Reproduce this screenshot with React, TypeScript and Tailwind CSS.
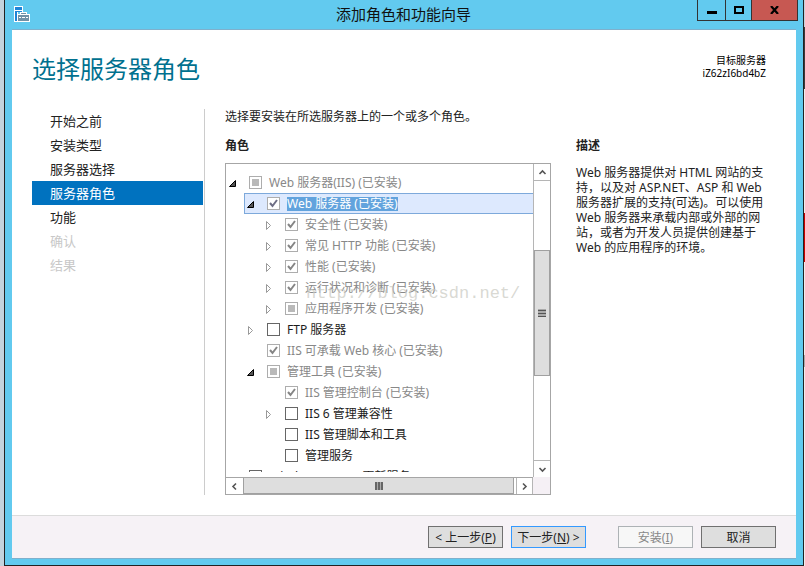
import { useState } from "react";
import clsx from "clsx";

type CheckState = "on" | "off" | "mixed";

type Role = {
  name: string;
  level: number;
  state: CheckState;
  installed?: boolean;
  arrow?: "open" | "closed";
};

const roles: Role[] = [
  { name: "Web 服务器(IIS) (已安装)", level: 0, state: "mixed", installed: true, arrow: "open" },
  { name: "Web 服务器 (已安装)", level: 1, state: "on", installed: true, arrow: "open" },
  { name: "安全性 (已安装)", level: 2, state: "on", installed: true, arrow: "closed" },
  { name: "常见 HTTP 功能 (已安装)", level: 2, state: "on", installed: true, arrow: "closed" },
  { name: "性能 (已安装)", level: 2, state: "on", installed: true, arrow: "closed" },
  { name: "运行状况和诊断 (已安装)", level: 2, state: "on", installed: true, arrow: "closed" },
  { name: "应用程序开发 (已安装)", level: 2, state: "mixed", installed: true, arrow: "closed" },
  { name: "FTP 服务器", level: 1, state: "off", arrow: "closed" },
  { name: "IIS 可承载 Web 核心 (已安装)", level: 1, state: "on", installed: true },
  { name: "管理工具 (已安装)", level: 1, state: "mixed", installed: true, arrow: "open" },
  { name: "IIS 管理控制台 (已安装)", level: 2, state: "on", installed: true },
  { name: "IIS 6 管理兼容性", level: 2, state: "off", arrow: "closed" },
  { name: "IIS 管理脚本和工具", level: 2, state: "off" },
  { name: "管理服务", level: 2, state: "off" },
  { name: "Windows Server 更新服务", level: 0, state: "off" },
];

const steps = ["开始之前", "安装类型", "服务器选择", "服务器角色", "功能", "确认", "结果"];

const indents = ["pl-0", "pl-[18px]", "pl-9"];

const ServerIcon = () => (
  <svg width="16" height="16" viewBox="0 0 16 16" shapeRendering="crispEdges">
    {/* server */}
    <path d="M0 0h9v7H4v9H0z" fill="#fff" />
    <path d="M1 1h7v3H1zM1 5h7v1H1zM1 6h2v9H1z" fill="#1f84d6" />
    <path d="M4 6h2v2H4z" fill="#62caef" />
    {/* toolbox */}
    <path d="M6 6h7v2h3v8H3V8h3z" fill="#fff" />
    <path d="M7 7h5v1H7zM4 9h11v2H4zM4 12h11v3H4z" fill="#7291a6" />
    <path d="M4 11h1v1H4zM14 11h1v1h-1zM7 11h1v1H7zM11 11h1v1h-1z" fill="#7291a6" />
  </svg>
);

const Arrow = ({ type }: { type: "open" | "closed" }) =>
  type === "open" ? (
    <svg width="7" height="7" viewBox="0 0 7 7">
      <path d="M6.5 0.5V6.5H0.5z" fill="#555" stroke="#000" />
    </svg>
  ) : (
    <svg width="7" height="11" viewBox="0 0 7 11">
      <path d="M1.5 1.5L5.5 5.5L1.5 9.5z" fill="#fff" stroke="#999" />
    </svg>
  );

const Chevron = ({ d }: { d: string }) => (
  <svg width="9" height="9" viewBox="0 0 9 9" fill="none" stroke="#555" strokeWidth="1.6">
    <path d={d} />
  </svg>
);

const RoleRow = ({ role, id, selected, onSelect }: { role: Role; id: string; selected: boolean; onSelect: () => void }) => {
  const [checked, setChecked] = useState(role.state !== "off");
  return (
    <li className={clsx("flex shrink-0 h-[21px]", indents[role.level])} onClick={onSelect}>
      <div
        className={clsx(
          "flex flex-1 items-center border-y border-l",
          selected ? "bg-[#dde9fe] border-[#7da9db]" : "border-transparent"
        )}
      >
        <span className="flex w-[22px] items-center pl-0.5 pt-0.5">
          {role.arrow && (
            <button type="button" aria-label="展开" className="flex">
              <Arrow type={role.arrow} />
            </button>
          )}
        </span>
        <span className="relative flex size-[13px]">
          <input
            id={id}
            type="checkbox"
            checked={checked}
            disabled={role.installed}
            onChange={() => setChecked(!checked)}
            className={clsx(
              "size-[13px] appearance-none border bg-white",
              role.installed ? "border-[#adadad]" : "border-[#666]"
            )}
          />
          {role.state === "mixed" && <span className="absolute inset-[3px] bg-[#b9b9b9]" />}
          {role.state !== "mixed" && checked && (
            <svg className="absolute inset-0 pointer-events-none" width="13" height="13" viewBox="0 0 13 13">
              <path d="M3 6L5.5 9L10 3" fill="none" stroke={selected ? "#6e6e85" : "#858585"} strokeWidth="2" />
            </svg>
          )}
        </span>
        <label
          htmlFor={id}
          className={clsx(
            "ml-[7px] whitespace-nowrap leading-[14px]",
            selected ? "bg-[#62a3dd] text-white" : role.installed ? "text-[#888]" : "text-[#1c1c1c]"
          )}
        >
          {role.name}
        </label>
      </div>
    </li>
  );
};

const RoleTree = () => {
  const [selected, setSelected] = useState(1);
  return (
    <div className="relative flex flex-1 min-h-0 flex-col border border-[#a6a6a6]">
      <div className="flex flex-1 min-h-0">
        <div className="flex flex-1 min-w-0 flex-col pb-[5px]">
          <ul className="flex flex-1 min-h-0 flex-col overflow-hidden pt-2">
            {roles.map((role, i) => (
              <RoleRow
                key={role.name}
                role={role}
                id={`role-${i}`}
                selected={selected === i}
                onSelect={() => setSelected(i)}
              />
            ))}
          </ul>
        </div>
        <div className="flex w-[17px] flex-col border-l border-[#b5b5b5] bg-white">
          <button type="button" aria-label="向上" className="flex h-[17px] items-center justify-center border-b border-[#b5b5b5]">
            <Chevron d="M1.5 6L4.5 3L7.5 6" />
          </button>
          <div className="grow-[69] basis-0" />
          <div className="flex grow-[125] basis-0 items-center justify-center border border-[#a0a0a0] bg-[#dedede]">
            <svg width="8" height="8" viewBox="0 0 8 8" shapeRendering="crispEdges">
              <path d="M0 0h8v8H0z" fill="#aaa" />
              <path d="M0 1h8v1H0zM0 4h8v1H0zM0 7h8v1H0z" fill="#555" />
            </svg>
          </div>
          <div className="grow-[85] basis-0" />
          <button type="button" aria-label="向下" className="flex h-[17px] items-center justify-center border-t border-[#b5b5b5]">
            <Chevron d="M1.5 3L4.5 6L7.5 3" />
          </button>
        </div>
      </div>
      <div className="flex h-[17px]">
        <div className="flex flex-1 border-t border-[#a6a6a6]">
          <button type="button" aria-label="向左" className="flex w-[17px] items-center justify-center">
            <Chevron d="M6 1.5L3 4.5L6 7.5" />
          </button>
          <div className="flex flex-1 items-center justify-center border-x border-b border-[#a0a0a0] bg-[#dedede]">
            <svg width="8" height="8" viewBox="0 0 8 8" shapeRendering="crispEdges">
              <path d="M0 0h8v8H0z" fill="#aaa" />
              <path d="M0 0h2v8H0zM3 0h2v8H3zM6 0h2v8H6z" fill="#666" />
            </svg>
          </div>
          <button type="button" aria-label="向右" className="ml-0.5 flex w-[17px] items-center justify-center border-x border-[#b5b5b5]">
            <Chevron d="M3 1.5L6 4.5L3 7.5" />
          </button>
        </div>
        <div className="w-[17px] bg-[#f5f0f5]" />
      </div>
      <span className="pointer-events-none absolute left-20 top-[118px] font-['Liberation_Mono',monospace] text-[17px] leading-6 text-[#c8c8c0]/70">
        http://blog.csdn.net/
      </span>
    </div>
  );
};

const TitleBar = () => (
  <header className="flex h-[29px] items-start">
    <div className="flex w-[105px] pl-[9px] pt-1.5">
      <ServerIcon />
    </div>
    <h1 className="flex-1 text-center text-[15px] leading-[29px] text-[#111]">添加角色和功能向导</h1>
    <div className="mr-[5px] flex h-[21px] border-x border-b border-[#333]">
      <button type="button" aria-label="最小化" className="flex w-[27px] items-center justify-center">
        <span className="mt-1 h-[3px] w-2.5 bg-black" />
      </button>
      <button type="button" aria-label="最大化" className="flex w-[26px] items-center justify-center border-l border-[#333]">
        <span className="h-2 w-2.5 border-2 border-black" />
      </button>
      <button type="button" aria-label="关闭" className="flex w-[46px] items-center justify-center border-l border-[#333] bg-[#c75852]">
        <svg width="9" height="8" viewBox="0 0 9 8">
          <path d="M1 0L8 8M8 0L1 8" stroke="#000" strokeWidth="2.2" />
        </svg>
      </button>
    </div>
  </header>
);

const Steps = () => (
  <nav className="w-[173px] border-r border-[#ccc] pr-px text-[13px] leading-6">
    {steps.map((step, i) => (
      <a
        key={step}
        href="#"
        className={clsx(
          "block pl-[18px]",
          i === 3 ? "bg-[#0072bf] text-white" : i > 4 ? "text-[#c8c8c8]" : "text-[#222]"
        )}
      >
        {step}
      </a>
    ))}
  </nav>
);

const button = "h-[22px] w-[75px] border pt-px text-xs leading-5 whitespace-nowrap";

const Footer = () => (
  <footer className="flex h-[43px] items-start justify-end gap-2 border-t border-[#dcdcdc] bg-[#f6f2f6] px-5 pt-2.5">
    <button type="button" className={clsx(button, "border-[#707070] bg-[#dedede]")}>
      &lt; 上一步(<u>P</u>)
    </button>
    <button type="button" className={clsx(button, "border-[#3399ff] bg-[#dedede]")}>
      下一步(<u>N</u>) &gt;
    </button>
    <button type="button" disabled className={clsx(button, "ml-6 border-[#adb2b5] bg-[#f7f7f7] text-[#888]")}>
      安装(<u>I</u>)
    </button>
    <button type="button" className={clsx(button, "border-[#707070] bg-[#dedede]")}>
      取消
    </button>
  </footer>
);

const App = () => {
  return (
    <div className="flex h-screen bg-[#c3d3dd] font-['Noto_Sans','Noto_Sans_CJK_SC',sans-serif] text-xs text-[#222]">
      <div className="ml-1 flex min-w-0 flex-1 flex-col border-x border-b border-[#222] bg-[#62caef]">
        <TitleBar />
        <main className="mx-[7px] mb-1.5 flex min-h-0 flex-1 flex-col border-y border-[#7fb0cc] bg-white">
          <div className="flex h-[79px] items-start justify-between pl-5 pr-[30px] pt-[23px]">
            <h2 className="text-2xl leading-8 text-[#00718f]">选择服务器角色</h2>
            <div className="text-right text-[10px] leading-[13px] text-black">
              <p className="pt-px">目标服务器</p>
              <p>iZ62zI6bd4bZ</p>
            </div>
          </div>
          <div className="flex min-h-0 flex-1 px-5 pb-5">
            <Steps />
            <section className="ml-5 flex min-w-0 flex-1 flex-col">
              <p className="leading-[15px]">选择要安装在所选服务器上的一个或多个角色。</p>
              <h3 className="mb-2.5 mt-3.5 font-bold leading-[15px]">角色</h3>
              <RoleTree />
            </section>
            <section className="ml-[25px] w-[200px] pt-[29px] leading-[15px]">
              <h3 className="mb-3 font-bold">描述</h3>
              <p>
                Web 服务器提供对 HTML 网站的支持，以及对 ASP.NET、ASP 和 Web
                服务器扩展的支持(可选)。可以使用 Web
                服务器来承载内部或外部的网站，或者为开发人员提供创建基于 Web 的应用程序的环境。
              </p>
            </section>
          </div>
          <Footer />
        </main>
      </div>
      {/* edge of the window behind */}
      <div className="flex w-px flex-col bg-[#eee]">
        <div className="h-[27px] bg-[#c3d3dd]" />
        <div className="h-[62px] bg-[#3a3a3a]" />
        <div className="mt-[124px] h-[49px] bg-[#c80000]" />
        <div className="mt-[93px] h-3 bg-[#aaa]" />
      </div>
    </div>
  );
};

export default App;
